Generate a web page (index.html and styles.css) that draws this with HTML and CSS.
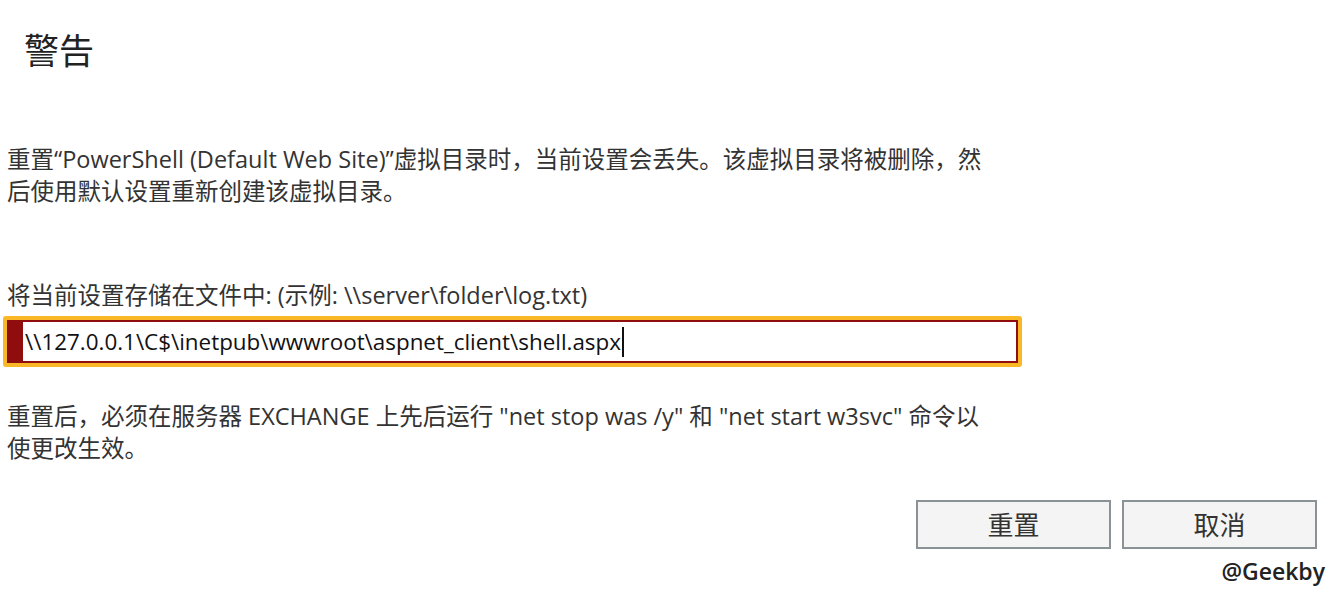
FILE: index.html
```html
<!DOCTYPE html>
<html lang="zh-CN">
<head>
  <meta charset="UTF-8" />
  <title>警告</title>
  <link rel="stylesheet" href="styles.css">
</head>
<body>
  <div class="dialog">
    <h1 class="title">警告</h1>
    <p class="msg">重置“PowerShell (Default Web Site)”虚拟目录时，当前设置会丢失。该虚拟目录将被删除，然<br>后使用默认设置重新创建该虚拟目录。</p>
    <label class="field-label" for="savePath">将当前设置存储在文件中: (示例: \\server\folder\log.txt)</label>
    <div class="field">
      <div class="field-inner">
        <span class="mark"></span>
        <span class="field-text">\\127.0.0.1\C$\inetpub\wwwroot\aspnet_client\shell.aspx</span><span class="caret"></span>
      </div>
    </div>
    <p class="msg note">重置后，必须在服务器 EXCHANGE 上先后运行 "net stop was /y" 和 "net start w3svc" 命令以<br>使更改生效。</p>
    <div class="actions">
      <button class="btn">重置</button>
      <button class="btn">取消</button>
    </div>
    <div class="watermark">@Geekby</div>
  </div>
</body>
</html>
```

FILE: styles.css
```css
body {
  margin: 0;
  background: #fff;
  color: #333;
  font-family: "Open Sans", "Noto Sans CJK SC", sans-serif;
}
.dialog {
  display: flex;
  flex-direction: column;
  padding: 0 19px 0 7px;
}
.title {
  margin: 30px 0 0 17px;
  font-size: 35px;
  font-weight: 400;
  line-height: 42px;
  color: #222;
}
.msg {
  margin: 71px 0 0;
  font-size: 23.5px;
  line-height: 32px;
}
.field-label {
  margin-top: 72px;
  font-size: 23.5px;
  line-height: 32px;
}
.field {
  margin: 5px 0 0 -4px;
  width: 1011px;
  height: 43px;
  border: 4px solid #fbb826;
  border-radius: 3px;
}
.field-inner {
  display: flex;
  align-items: center;
  height: 39px;
  border: 2px solid #8f0d0d;
  background: #fff;
}
.mark {
  width: 14px;
  align-self: stretch;
  background: #8f0d0d;
}
.field-text {
  margin-left: 2px;
  font-size: 22.4px;
  color: #111;
  white-space: nowrap;
}
.caret {
  width: 2px;
  height: 30px;
  margin-left: 1px;
  background: #111;
}
.note {
  margin-top: 33px;
}
.actions {
  display: flex;
  justify-content: flex-end;
  gap: 11px;
  margin-top: 36px;
}
.btn {
  width: 195px;
  height: 49px;
  border: 2px solid #8a9296;
  background: #f4f4f4;
  color: #333;
  font-family: inherit;
  font-size: 26px;
  line-height: 1;
}
.watermark {
  align-self: flex-end;
  margin: 6px -8px 0 0;
  font-size: 23px;
  font-weight: 600;
  color: #222;
}
```
